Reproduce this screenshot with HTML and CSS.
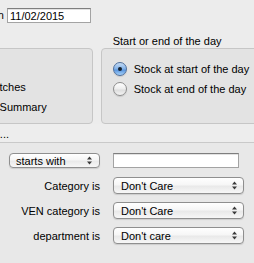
FILE: index.html
```html
<!DOCTYPE html>
<html lang="en">
<head>
    <meta charset="UTF-8">
    <meta name="viewport" content="width=device-width, initial-scale=1.0">
    <title>Stock report</title>
    <link rel="stylesheet" href="styles.css">
</head>
<body>

    <div class="window">
        <!-- date -->
        <div class="date-row">
            <span class="date-label">Stock on</span>
            <input type="text" class="field date" value="11/02/2015">
        </div>

        <!-- option groups -->
        <div class="groups">
            <div class="group left">
                <div class="group-title"></div>
                <div class="box">
                    <div class="option"><span class="radio on"></span><span>Items</span></div>
                    <div class="option"><span class="radio"></span><span>All matches</span></div>
                    <div class="option"><span class="radio"></span><span>Show Summary</span></div>
                </div>
            </div>
            <div class="group right">
                <div class="group-title">Start or end of the day</div>
                <div class="box">
                    <div class="option"><span class="radio on"></span><span>Stock at start of the day</span></div>
                    <div class="option"><span class="radio"></span><span>Stock at end of the day</span></div>
                </div>
            </div>
        </div>

        <div class="status"><span class="status-text">Searching...</span></div>

        <!-- filters -->
        <div class="filters">
            <div class="popup small">
                <span>starts with</span>
                <svg class="arrows" width="5" height="9" viewBox="0 0 5 9"><path d="M2.5 0.5L5 3.5H0z M2.5 8.5L0 5.5H5z" fill="#3a3a3a"/></svg>
            </div>
            <input type="text" class="field search" value="">

            <span class="label">Category is</span>
            <div class="popup">
                <span>Don't Care</span>
                <svg class="arrows" width="5" height="9" viewBox="0 0 5 9"><path d="M2.5 0.5L5 3.5H0z M2.5 8.5L0 5.5H5z" fill="#3a3a3a"/></svg>
            </div>

            <span class="label">VEN category is</span>
            <div class="popup">
                <span>Don't Care</span>
                <svg class="arrows" width="5" height="9" viewBox="0 0 5 9"><path d="M2.5 0.5L5 3.5H0z M2.5 8.5L0 5.5H5z" fill="#3a3a3a"/></svg>
            </div>

            <span class="label">department is</span>
            <div class="popup">
                <span>Don't care</span>
                <svg class="arrows" width="5" height="9" viewBox="0 0 5 9"><path d="M2.5 0.5L5 3.5H0z M2.5 8.5L0 5.5H5z" fill="#3a3a3a"/></svg>
            </div>
        </div>
    </div>

</body>
</html>
```

FILE: styles.css
```css
html, body {
    margin: 0;
    padding: 0;
}
body {
    width: 254px;
    height: 263px;
    overflow: hidden;
    background-color: #ececec;
    font-family: 'Liberation Sans', Arial, sans-serif;
    font-size: 11px;
    color: #000;
}
.window {
    margin-left: -62px;
    width: 340px;
}
.date-row {
    display: flex;
    align-items: flex-start;
    gap: 3px;
    padding-top: 8px;
}
.date-label {
    width: 66px;
    text-align: right;
    line-height: 15px;
}
.field {
    box-sizing: border-box;
    height: 15px;
    margin: 0;
    padding: 0 2px;
    border: 1px solid #a3a3a3;
    border-top-color: #7e7e7e;
    background: #fff;
    box-shadow: inset 0 1px 0 #e2e2e2;
    font-family: inherit;
    font-size: 11px;
    color: #000;
    outline: none;
}
.date {
    width: 84px;
}
.groups {
    display: flex;
    gap: 8px;
    margin-top: 12px;
}
.group.left {
    width: 157px;
}
.group.right {
    width: 180px;
}
.group-title {
    height: 13px;
    line-height: 13px;
    padding-left: 12px;
    white-space: nowrap;
}
.box {
    box-sizing: border-box;
    height: 76px;
    border: 1px solid #c6c6c6;
    border-radius: 4px;
    background: #e3e3e3;
    padding-top: 10px;
}
.left .box {
    padding-top: 8px;
}
.option {
    display: flex;
    align-items: center;
    gap: 7px;
    height: 20px;
    padding-left: 11px;
    white-space: nowrap;
}
.left .option {
    padding-left: 9px;
}
.radio {
    box-sizing: border-box;
    width: 14px;
    height: 14px;
    border-radius: 50%;
    border: 1px solid #8e8e8e;
    background: linear-gradient(#fefefe, #efefef 45%, #dedede 60%, #f4f4f4);
    box-shadow: 0 1px 1px rgba(0, 0, 0, 0.12);
    display: flex;
    align-items: center;
    justify-content: center;
    flex: none;
}
.radio.on {
    border-color: #4f6f9c;
    background: linear-gradient(#c6dcf4, #87b5ea 45%, #5d98df 60%, #a6d0f8);
}
.radio.on::after {
    content: '';
    width: 4px;
    height: 4px;
    border-radius: 50%;
    background: #16202c;
}
.status {
    box-sizing: border-box;
    height: 18px;
    padding-top: 2px;
    line-height: 16px;
    background: #ededed;
}
.status-text {
    display: inline-block;
    width: 71px;
    text-align: right;
    white-space: nowrap;
}
.filters {
    border-top: 1px solid #c9c9c9;
    background: #e8e8e8;
    height: 130px;
    padding-top: 9px;
    display: grid;
    grid-template-columns: 162px 131px;
    grid-auto-rows: 17px;
    column-gap: 13px;
    row-gap: 8px;
    align-items: center;
}
.label {
    justify-self: end;
    text-align: right;
    white-space: nowrap;
}
.search {
    width: 126px;
}
.popup {
    box-sizing: border-box;
    height: 17px;
    border: 1px solid #8f8f8f;
    border-radius: 4px;
    background: linear-gradient(#ffffff, #f6f6f6 45%, #e9e9e9 55%, #f7f7f7);
    box-shadow: 0 1px 1px rgba(0, 0, 0, 0.12);
    display: flex;
    align-items: center;
    justify-content: space-between;
    padding: 0 6px 0 7px;
    white-space: nowrap;
}
.popup.small {
    justify-self: end;
    width: 91px;
    height: 15px;
    padding-left: 6px;
    padding-right: 7px;
}
.arrows {
    display: block;
}
```
